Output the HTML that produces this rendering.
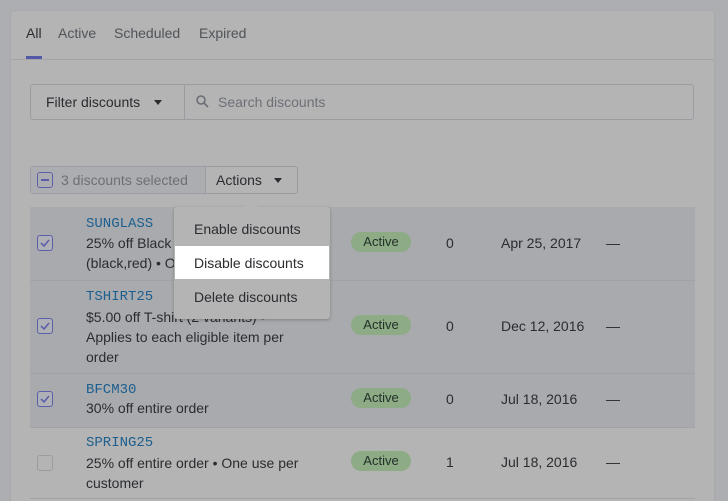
<!DOCTYPE html>
<html><head><style>
*{box-sizing:border-box;margin:0;padding:0}
html,body{width:728px;height:501px;overflow:hidden}
body{background:#adaeb1;font-family:"Liberation Sans",sans-serif;color:#2a2c30;font-size:14px;position:relative}
.card{position:absolute;left:10px;top:10px;width:705px;height:500px;background:#b4b4b4;border-radius:4px;border:1px solid #a8a9ab}
.abs{position:absolute}
.tab{position:absolute;top:25px;font-size:14px;color:#4f5459}
.mono{font-family:"Liberation Mono",monospace;color:#1c5f8f;font-size:14px}
.cb{position:absolute;left:37px;width:16px;height:16px;border:1px solid #5b5fa8;border-radius:3px;background:#b0b1b6}
.cb svg{position:absolute;left:2px;top:2px}
.badge{position:absolute;left:351px;width:60px;height:20px;border-radius:10px;background:#8dab85;font-size:13px;text-align:center;line-height:20px;color:#22302a}
.t{position:absolute;font-size:14px}
</style></head><body>
<div class="card"></div>
<div class="tab" style="left:26px;color:#2a2c30">All</div>
<div class="tab" style="left:58px">Active</div>
<div class="tab" style="left:114px">Scheduled</div>
<div class="tab" style="left:199px">Expired</div>
<div class="abs" style="left:26px;top:56px;width:16px;height:3px;background:#5358a8"></div>
<div class="abs" style="left:11px;top:59px;width:703px;height:1px;background:#a3a4a6"></div>

<div class="abs" style="left:30px;top:84px;width:664px;height:36px;border:1px solid #9a9ca2;border-radius:3px"></div>
<div class="abs" style="left:184px;top:85px;width:1px;height:34px;background:#9a9ca2"></div>
<div class="t" style="left:46px;top:94px">Filter discounts</div>
<div class="abs" style="left:154px;top:100px;border-left:4px solid transparent;border-right:4px solid transparent;border-top:5px solid #2a2c30"></div>
<svg class="abs" style="left:196px;top:95px" width="13" height="13"><circle cx="5" cy="5" r="4" fill="none" stroke="#6a6e74" stroke-width="1.6"/><path d="M8 8l4 4" stroke="#6a6e74" stroke-width="1.6"/></svg>
<div class="t" style="left:218px;top:94px;color:#6c7076">Search discounts</div>

<div class="abs" style="left:30px;top:166px;width:268px;height:28px;border:1px solid #9a9ca2;border-radius:3px"></div>
<div class="abs" style="left:31px;top:167px;width:174px;height:26px;background:#acadb0"></div>
<div class="abs" style="left:205px;top:167px;width:1px;height:26px;background:#9a9ca2"></div>
<div class="abs" style="left:37px;top:172px;width:16px;height:16px;border:1px solid #5b5fa8;border-radius:3px"><div style="position:absolute;left:3px;top:6px;width:8px;height:2px;background:#5b5fa8"></div></div>
<div class="t" style="left:61px;top:172px;color:#6c7076">3 discounts selected</div>
<div class="t" style="left:216px;top:172px">Actions</div>
<div class="abs" style="left:274px;top:178px;border-left:4px solid transparent;border-right:4px solid transparent;border-top:5px solid #2a2c30"></div>

<div class="abs" style="left:30px;top:207px;width:665px;height:220px;background:#a9aaae"></div>
<div class="abs" style="left:30px;top:280px;width:665px;height:1px;background:#a1a2a6"></div>
<div class="abs" style="left:30px;top:373px;width:665px;height:1px;background:#a1a2a6"></div>
<div class="abs" style="left:30px;top:427px;width:665px;height:1px;background:#a1a2a6"></div>
<div class="abs" style="left:30px;top:498px;width:665px;height:1px;background:#a1a2a6"></div>

<div class="cb" style="top:235px"><svg width="10" height="10"><path d="M1 5l3 3 5-6" fill="none" stroke="#5b5fa8" stroke-width="1.6"/></svg></div>
<div class="cb" style="top:318px"><svg width="10" height="10"><path d="M1 5l3 3 5-6" fill="none" stroke="#5b5fa8" stroke-width="1.6"/></svg></div>
<div class="cb" style="top:391px"><svg width="10" height="10"><path d="M1 5l3 3 5-6" fill="none" stroke="#5b5fa8" stroke-width="1.6"/></svg></div>
<div class="cb" style="top:455px;border-color:#9a9ca2;background:#b4b4b4"></div>

<div class="t mono" style="left:86px;top:216px">SUNGLASS</div>
<div class="t" style="left:86px;top:233px;line-height:20px">25% off Black<br>(black,red) • O</div>
<div class="t mono" style="left:86px;top:289px">TSHIRT25</div>
<div class="t" style="left:86px;top:307px;line-height:20px">$5.00 off T-shirt (2 variants) •<br>Applies to each eligible item per<br>order</div>
<div class="t mono" style="left:86px;top:382px">BFCM30</div>
<div class="t" style="left:86px;top:400px">30% off entire order</div>
<div class="t mono" style="left:86px;top:435px">SPRING25</div>
<div class="t" style="left:86px;top:453px;line-height:20px">25% off entire order • One use per<br>customer</div>

<div class="badge" style="top:232px">Active</div>
<div class="badge" style="top:315px">Active</div>
<div class="badge" style="top:388px">Active</div>
<div class="badge" style="top:451px">Active</div>
<div class="t" style="left:446px;top:235px">0</div>
<div class="t" style="left:446px;top:318px">0</div>
<div class="t" style="left:446px;top:391px">0</div>
<div class="t" style="left:446px;top:454px">1</div>
<div class="t" style="left:501px;top:235px">Apr 25, 2017</div>
<div class="t" style="left:501px;top:318px">Dec 12, 2016</div>
<div class="t" style="left:501px;top:391px">Jul 18, 2016</div>
<div class="t" style="left:501px;top:454px">Jul 18, 2016</div>
<div class="t" style="left:606px;top:235px">—</div>
<div class="t" style="left:606px;top:318px">—</div>
<div class="t" style="left:606px;top:391px">—</div>
<div class="t" style="left:606px;top:454px">—</div>

<div class="abs" style="left:174px;top:207px;width:156px;height:112px;background:#b4b4b4;border-radius:3px;box-shadow:0 1px 3px rgba(0,0,0,.25)"></div>
<div class="abs" style="left:246px;top:201px;width:10px;height:10px;background:#b4b4b4;transform:rotate(45deg)"></div>
<div class="abs" style="left:175px;top:246px;width:154px;height:33px;background:#fff"></div>
<div class="t" style="left:194px;top:221px">Enable discounts</div>
<div class="t" style="left:194px;top:255px">Disable discounts</div>
<div class="t" style="left:194px;top:289px">Delete discounts</div>
</body></html>
